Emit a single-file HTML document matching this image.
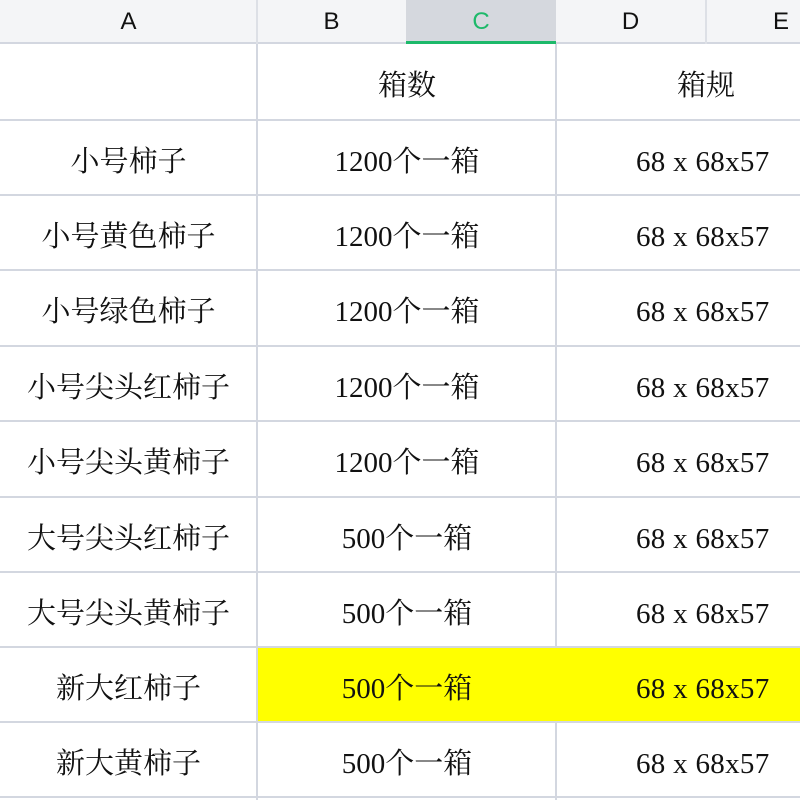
<!DOCTYPE html>
<html><head><meta charset="utf-8"><style>
*{margin:0;padding:0;box-sizing:border-box}
body{width:800px;height:800px;overflow:hidden;background:#fff;position:relative;font-family:"Liberation Serif","Noto Serif CJK SC",serif;color:#111}
.h{position:absolute;top:0;height:44px;background:#f4f5f7;border-bottom:2px solid #d3d7e0;font-family:"Liberation Sans",sans-serif;font-size:24px;line-height:44px;text-align:center;color:#111}
.vl{position:absolute;width:2px;background:#d3d7e0}
.hl{position:absolute;left:0;width:800px;height:2px;background:#d3d7e0}
.t{position:absolute;font-size:29px;text-align:center;line-height:75px;height:75px;white-space:nowrap;margin-top:2px}
.n{left:636px;text-align:left;letter-spacing:0.3px}
.y{position:absolute;background:#ffff00}
</style></head><body>
<div class="h" style="left:0;width:257px">A</div>
<div class="h" style="left:257px;width:149px">B</div>
<div class="h" style="left:406px;width:150px;background:#d5d8de;border-bottom:3px solid #1db96a;color:#1db96a">C</div>
<div class="h" style="left:556px;width:149px">D</div>
<div class="h" style="left:705px;width:95px;text-align:left;padding-left:68px">E</div>
<div class="vl" style="left:256px;top:0;height:44px;background:#dde0e6"></div>
<div class="vl" style="left:705px;top:0;height:44px;background:#dde0e6"></div>
<div class="vl" style="left:256px;top:44px;height:756px"></div>
<div class="vl" style="left:555px;top:44px;height:756px"></div>
<div class="hl" style="top:119px"></div>
<div class="hl" style="top:194px"></div>
<div class="hl" style="top:269px"></div>
<div class="hl" style="top:345px"></div>
<div class="hl" style="top:420px"></div>
<div class="hl" style="top:496px"></div>
<div class="hl" style="top:571px"></div>
<div class="hl" style="top:646px"></div>
<div class="hl" style="top:721px"></div>
<div class="hl" style="top:796px"></div>
<div class="y" style="left:258px;top:648px;width:542px;height:73px"></div>

<div class="t" style="left:257px;width:300px;top:47px">箱数</div>
<div class="t" style="left:556px;width:300px;top:47px">箱规</div>

<div class="t" style="left:0;width:257px;top:123px">小号柿子</div>
<div class="t" style="left:0;width:257px;top:198px">小号黄色柿子</div>
<div class="t" style="left:0;width:257px;top:273px">小号绿色柿子</div>
<div class="t" style="left:0;width:257px;top:349px">小号尖头红柿子</div>
<div class="t" style="left:0;width:257px;top:424px">小号尖头黄柿子</div>
<div class="t" style="left:0;width:257px;top:500px">大号尖头红柿子</div>
<div class="t" style="left:0;width:257px;top:575px">大号尖头黄柿子</div>
<div class="t" style="left:0;width:257px;top:650px">新大红柿子</div>
<div class="t" style="left:0;width:257px;top:725px">新大黄柿子</div>

<div class="t" style="left:257px;width:300px;top:123px">1200个一箱</div>
<div class="t" style="left:257px;width:300px;top:198px">1200个一箱</div>
<div class="t" style="left:257px;width:300px;top:273px">1200个一箱</div>
<div class="t" style="left:257px;width:300px;top:349px">1200个一箱</div>
<div class="t" style="left:257px;width:300px;top:424px">1200个一箱</div>
<div class="t" style="left:257px;width:300px;top:500px">500个一箱</div>
<div class="t" style="left:257px;width:300px;top:575px">500个一箱</div>
<div class="t" style="left:257px;width:300px;top:650px">500个一箱</div>
<div class="t" style="left:257px;width:300px;top:725px">500个一箱</div>

<div class="t n" style="top:123px">68 x 68x57</div>
<div class="t n" style="top:198px">68 x 68x57</div>
<div class="t n" style="top:273px">68 x 68x57</div>
<div class="t n" style="top:349px">68 x 68x57</div>
<div class="t n" style="top:424px">68 x 68x57</div>
<div class="t n" style="top:500px">68 x 68x57</div>
<div class="t n" style="top:575px">68 x 68x57</div>
<div class="t n" style="top:650px">68 x 68x57</div>
<div class="t n" style="top:725px">68 x 68x57</div>
</body></html>
